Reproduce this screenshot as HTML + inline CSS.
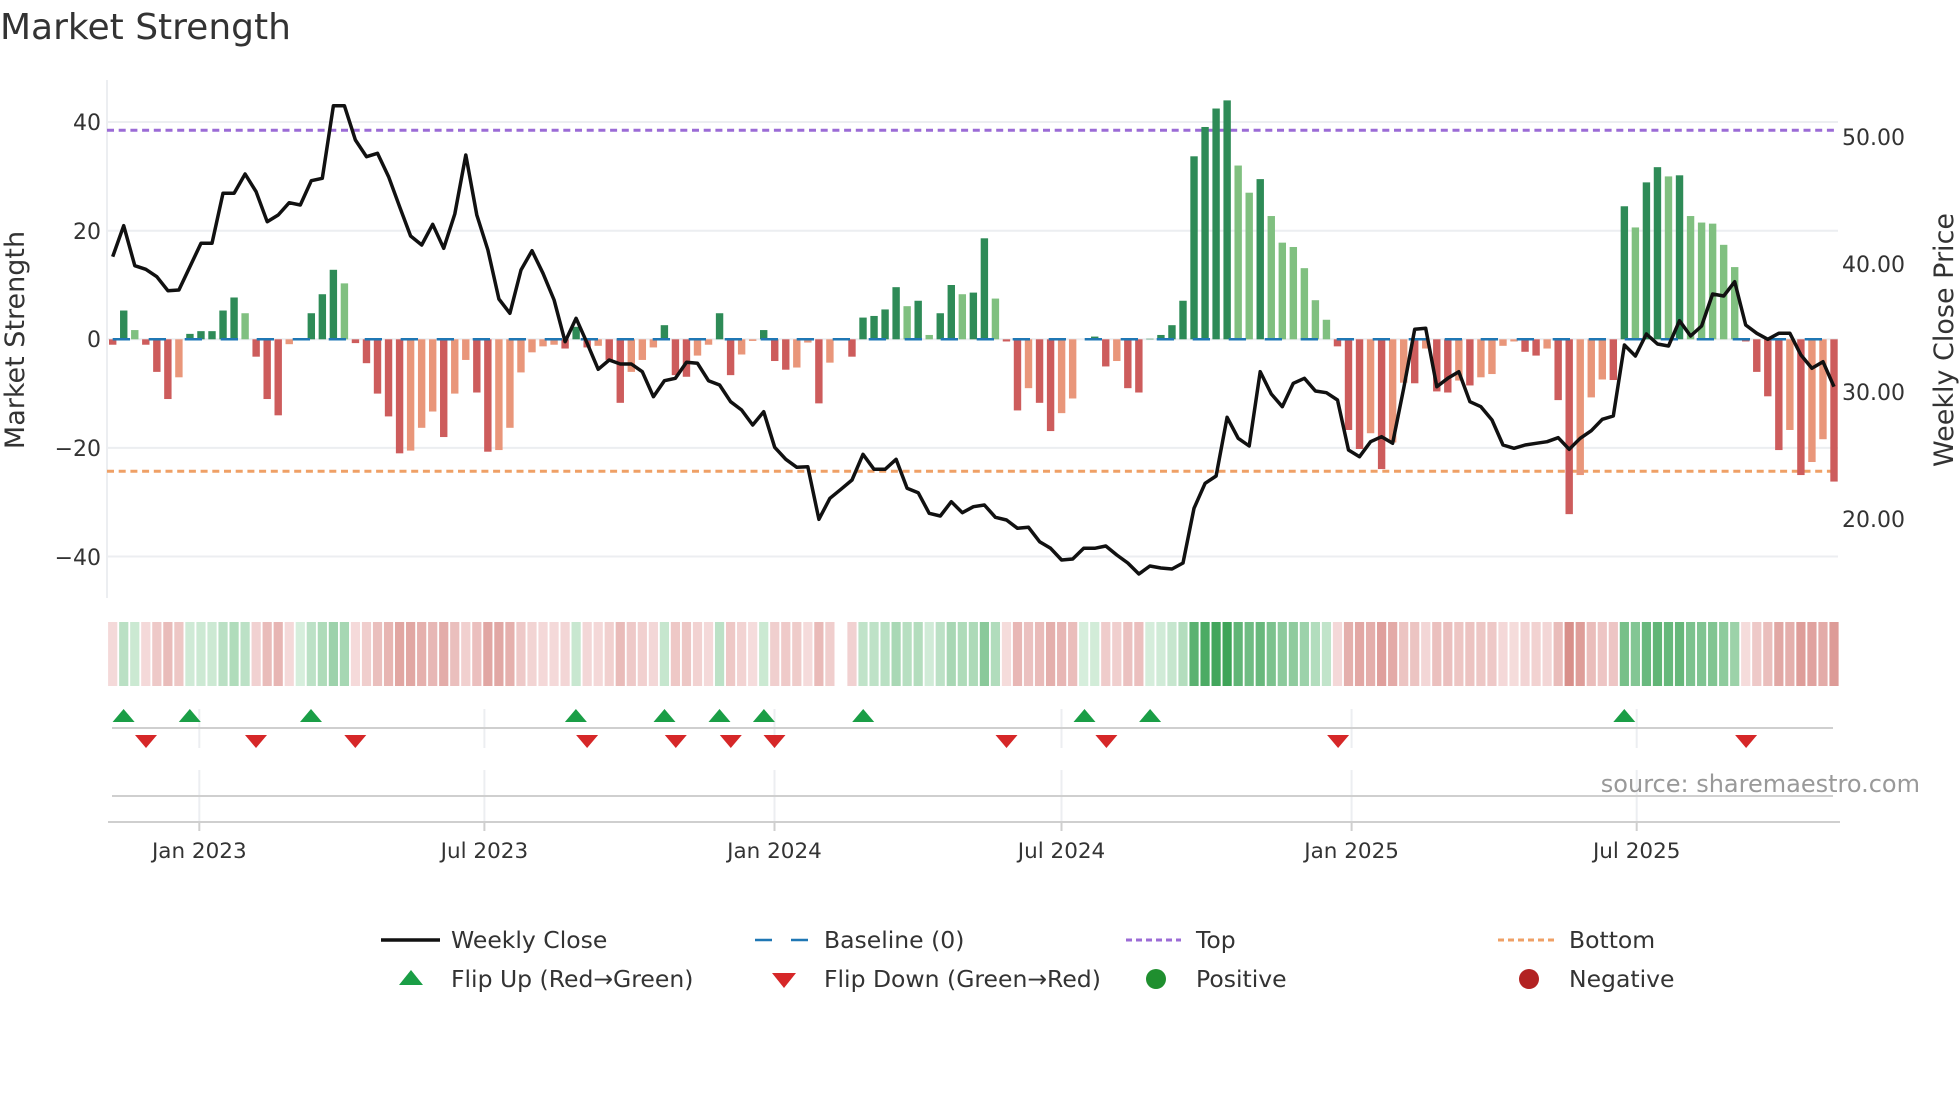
<!DOCTYPE html>
<html><head><meta charset="utf-8">
<style>
html,body{margin:0;padding:0;background:#fff;width:1960px;height:1102px;overflow:hidden}
svg{display:block;font-family:"DejaVu Sans","Liberation Sans",sans-serif}
</style></head>
<body>
<svg id="s" width="1960" height="1102" viewBox="0 0 1960 1102" xmlns="http://www.w3.org/2000/svg">
<text x="0" y="39" font-size="36" fill="#333">Market Strength</text>
<g stroke="#eceef1" stroke-width="2">
<line x1="107" y1="122" x2="1838" y2="122"/>
<line x1="107" y1="230.7" x2="1838" y2="230.7"/>
<line x1="107" y1="339.3" x2="1838" y2="339.3"/>
<line x1="107" y1="447.9" x2="1838" y2="447.9"/>
<line x1="107" y1="556.5" x2="1838" y2="556.5"/>
</g>
<line x1="107" y1="80" x2="107" y2="598" stroke="#eceef1" stroke-width="2"/>
<g font-size="22" fill="#333" text-anchor="end">
<text x="101" y="130">40</text>
<text x="101" y="239">20</text>
<text x="101" y="347">0</text>
<text x="101" y="456">−20</text>
<text x="101" y="565">−40</text>
</g>
<g font-size="22" fill="#333">
<text x="1842" y="145">50.00</text>
<text x="1842" y="272">40.00</text>
<text x="1842" y="400">30.00</text>
<text x="1842" y="527">20.00</text>
</g>
<text transform="translate(24,340) rotate(-90)" font-size="27" fill="#333" text-anchor="middle">Market Strength</text>
<text transform="translate(1953,340) rotate(-90)" font-size="27" fill="#333" text-anchor="middle">Weekly Close Price</text>
<line x1="107" y1="130.3" x2="1838" y2="130.3" stroke="#9b6bd6" stroke-width="3" stroke-dasharray="7 4.7"/>
<line x1="107" y1="471.3" x2="1838" y2="471.3" stroke="#efa066" stroke-width="3" stroke-dasharray="7 4.7"/>
<g id="bars"></g>
<line x1="104" y1="339.3" x2="1838" y2="339.3" stroke="#1f77b4" stroke-width="2.5" stroke-dasharray="17.3 18.7" stroke-dashoffset="-8.7"/>
<polyline id="pl" fill="none" stroke="#111" stroke-width="3.5" stroke-linejoin="round"/>
<g id="strip"></g>
<g stroke="#eceef1" stroke-width="2">
<line x1="199.3" y1="709" x2="199.3" y2="748"/><line x1="484.4" y1="709" x2="484.4" y2="748"/><line x1="774.5" y1="709" x2="774.5" y2="748"/><line x1="1061.5" y1="709" x2="1061.5" y2="748"/><line x1="1351.6" y1="709" x2="1351.6" y2="748"/><line x1="1636.7" y1="709" x2="1636.7" y2="748"/>
<line x1="199.3" y1="770" x2="199.3" y2="822"/><line x1="484.4" y1="770" x2="484.4" y2="822"/><line x1="774.5" y1="770" x2="774.5" y2="822"/><line x1="1061.5" y1="770" x2="1061.5" y2="822"/><line x1="1351.6" y1="770" x2="1351.6" y2="822"/><line x1="1636.7" y1="770" x2="1636.7" y2="822"/>
</g>
<line x1="112" y1="728" x2="1833" y2="728" stroke="#cfcfcf" stroke-width="2"/>
<line x1="112" y1="796" x2="1833" y2="796" stroke="#cfcfcf" stroke-width="2"/>
<line x1="108" y1="822" x2="1840" y2="822" stroke="#cfcfcf" stroke-width="2"/>
<g stroke="#cfcfcf" stroke-width="2">
<line x1="199.3" y1="822" x2="199.3" y2="831"/><line x1="484.4" y1="822" x2="484.4" y2="831"/><line x1="774.5" y1="822" x2="774.5" y2="831"/><line x1="1061.5" y1="822" x2="1061.5" y2="831"/><line x1="1351.6" y1="822" x2="1351.6" y2="831"/><line x1="1636.7" y1="822" x2="1636.7" y2="831"/>
</g>
<g id="mk"></g>
<text x="1920" y="792" font-size="24" fill="#999" text-anchor="end">source: sharemaestro.com</text>
<g font-size="21.5" fill="#333" text-anchor="middle">
<text x="199.3" y="858">Jan 2023</text><text x="484.4" y="858">Jul 2023</text><text x="774.5" y="858">Jan 2024</text><text x="1061.5" y="858">Jul 2024</text><text x="1351.6" y="858">Jan 2025</text><text x="1636.7" y="858">Jul 2025</text>
</g>
<g font-size="23.5" fill="#333">
<line x1="381" y1="940" x2="440" y2="940" stroke="#111" stroke-width="3.5"/>
<text x="451" y="948">Weekly Close</text>
<line x1="755" y1="940" x2="808" y2="940" stroke="#1f77b4" stroke-width="2.5" stroke-dasharray="17 19"/>
<text x="824" y="948">Baseline (0)</text>
<line x1="1126" y1="940" x2="1181" y2="940" stroke="#9b6bd6" stroke-width="3" stroke-dasharray="6 4"/>
<text x="1196" y="948">Top</text>
<line x1="1498" y1="940" x2="1554" y2="940" stroke="#efa066" stroke-width="3" stroke-dasharray="6 4"/>
<text x="1569" y="948">Bottom</text>
<polygon points="399,985 423,985 411,970" fill="#1a9e46"/>
<text x="451" y="987">Flip Up (Red→Green)</text>
<polygon points="772,973 796,973 784,988" fill="#d62728"/>
<text x="824" y="987">Flip Down (Green→Red)</text>
<circle cx="1156" cy="979" r="10" fill="#1f8f2f"/>
<text x="1196" y="987">Positive</text>
<circle cx="1529" cy="979" r="10" fill="#b22222"/>
<text x="1569" y="987">Negative</text>
</g>
</svg>
<script>
var v=[-1,5.3,1.7,-1,-6,-11,-7,1,1.5,1.5,5.3,7.7,4.8,-3.2,-11,-14,-0.9,0,4.8,8.3,12.8,10.3,-0.7,-4.4,-10,-14.2,-21,-20.5,-16.3,-13.3,-18,-10,-3.8,-9.8,-20.7,-20.4,-16.3,-6.1,-2.4,-1.3,-1,
-1.7,2.3,-1.5,-1.2,-3.8,-11.7,-6,-3.8,-1.5,2.6,-6.6,-6.9,-3,-1,4.8,-6.6,-2.8,-0.3,1.7,-4,-5.6,-5.2,-0.6,-11.8,-4.3,0,-3.2,4,4.3,5.5,9.6,6.1,7.1,0.8,4.8,10,8.3,8.6,18.6,7.5,-0.4,-13.1,-9,
-11.7,-16.9,-13.6,-10.9,0,0.5,-5,-4,-9,-9.8,0.1,0.8,2.6,7.1,33.7,39.1,42.5,44,32,27,29.5,22.7,17.8,17,13.1,7.2,3.6,-1.3,-16.7,-20.2,-17.3,-23.9,-19,-8,-8.1,-1.7,-9.6,-9.8,-7.6,-8.5,-7,-6.4,-1.2,-0.4,-2.3,-3,-1.7,-11.2,-32.2,-25,-10.7,-7.4,-7.5,24.5,20.6,28.9,31.7,30,30.2,22.7,21.5,21.3,17.4,13.3,-0.4,-6,-10.5,-20.4,-16.7,-25,-22.6,-18.4,-26.2];
var ly=[590,497,617,628,650,692,690,620,550,550,400,400,342,395,485,465,428,435,362,355,137,137,240,290,280,350,440,528,555,493,565,462,285,465,570,717,760,630,572,640,720,
845,775,850,928,900,912,912,935,1010,962,955,907,910,962,975,1025,1050,1095,1055,1162,1198,1222,1220,1378,1315,1288,1260,1183,1228,1228,1198,1285,1298,1360,1368,1325,1358,1340,1335,1372,1380,1405,1402,
1445,1465,1500,1497,1465,1465,1458,1485,1509,1542,1518,1524,1527,1509,1345,1270,1248,1072,1135,1158,935,1002,1040,970,955,993,998,1020,1170,1190,1145,1130,1150,985,808,805,980,955,935,1025,1040,
1080,1155,1165,1155,1150,1145,1133,1168,1135,1112,1078,1068,855,888,822,852,858,782,828,798,702,708,665,795,820,838,820,820,885,925,905,980];
var NS="http://www.w3.org/2000/svg";
function el(t,a,p){var e=document.createElementNS(NS,t);for(var k in a)e.setAttribute(k,a[k]);p.appendChild(e);return e;}
var bars=document.getElementById('bars'),strip=document.getElementById('strip');
function X(k){return 112.7+11.034*k;}
function mix(a,b,t){var r=[];for(var i=0;i<3;i++)r.push(Math.round(a[i]+(b[i]-a[i])*t));return 'rgb('+r.join(',')+')';}
var pts=[];
for(var k=0;k<v.length;k++){
  var x=X(k),val=v[k],prev=k?v[k-1]:0,c;
  if(val>=0) c=(val>=prev)?'#2e8b57':'#80c080'; else c=(val<=prev)?'#cd5c5c':'#e9967a';
  var y0=339.3,y1=339.3-val*5.43;
  if(Math.abs(val)>0.05) el('rect',{x:x-3.7,y:Math.min(y0,y1),width:7.4,height:Math.abs(y1-y0),fill:c},bars);
  pts.push(x.toFixed(1)+','+(60+ly[k]/3).toFixed(1));
  if(k!==66){
    var t=Math.min(1,Math.pow(Math.abs(val)/44,0.8));
    var sc=val>=0?mix([214,238,220],[62,164,88],t):mix([246,222,222],[208,120,114],t);
    el('rect',{x:x-4.6,y:622,width:9.2,height:64,fill:sc},strip);
  }
}
document.getElementById('pl').setAttribute('points',pts.join(' '));
var mk=document.getElementById('mk');
[123.6,189.8,311,575.9,664.5,719.5,763.9,863.2,1084.5,1150.1,1624.3].forEach(function(x){el('polygon',{points:(x-11)+',722 '+(x+11)+',722 '+x+',709',fill:'#1a9e46'},mk);});
[146,256,355.3,587.1,675.8,730.8,774.5,1006.5,1106.4,1338.1,1746.1].forEach(function(x){el('polygon',{points:(x-11)+',735 '+(x+11)+',735 '+x+',748',fill:'#d62728'},mk);});
</script>
</body></html>
